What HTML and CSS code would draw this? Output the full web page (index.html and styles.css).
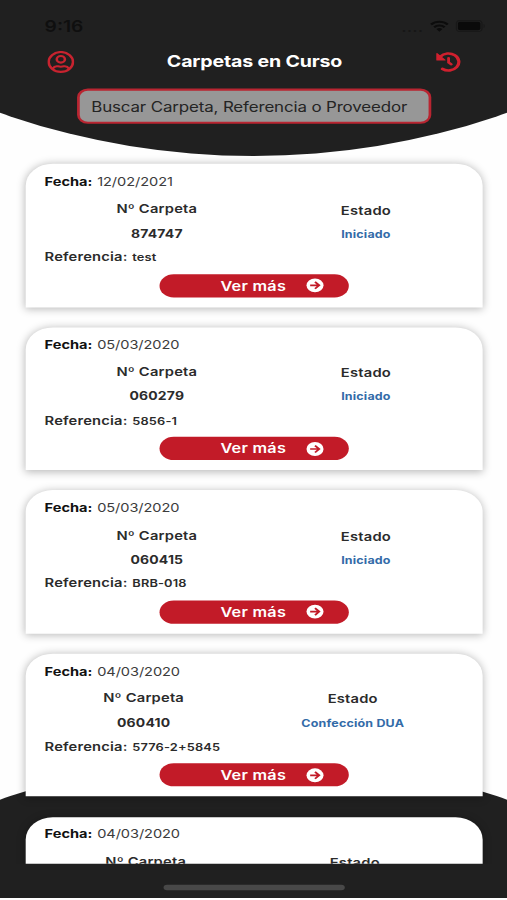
FILE: index.html
```
<!DOCTYPE html>
<html lang="es">
<head>
<meta charset="utf-8">
<title>Carpetas en Curso</title>
<link rel="stylesheet" href="styles.css">
</head>
<body>
<svg width="0" height="0" class="defs">
  <symbol id="go" viewBox="0 0 14 14"><circle cx="7" cy="7" r="6.3" fill="#fff"/><path d="M3.4 7h6.4M7 3.9 10.1 7 7 10.1" fill="none" stroke="#c21b28" stroke-width="1.5"/></symbol>
</svg>
<main class="phone">
  <div class="curve-top"></div>
  <div class="curve-bottom"></div>
  <header class="status">
    <span class="time">9:16</span>
    <span class="signals">
      <span class="dots">....</span>
      <svg width="14" height="11" viewBox="0 0 14 11"><g fill="none" stroke="#0c0c0c" stroke-width="1.9"><path d="M.8 4.1a9 9 0 0 1 12.4 0M3.1 6.6a5.6 5.6 0 0 1 7.8 0"/></g><path d="M4.8 8.3a3.3 3.3 0 0 1 4.4 0L7 10.7z" fill="#0c0c0c"/></svg>
      <svg width="22" height="11" viewBox="0 0 22 11"><rect x=".5" y=".5" width="19" height="10" rx="2.8" fill="none" stroke="#181818"/><rect x="1.7" y="1.7" width="16.6" height="7.6" rx="1.6" fill="#0a0a0a"/><path d="M20.6 3.8v3.4q1-.5 1-1.7t-1-1.7" fill="#181818"/></svg>
    </span>
  </header>
  <nav class="bar">
    <svg width="20" height="20" viewBox="0 0 20 20" fill="none" stroke="#c8232f" stroke-width="1.9"><circle cx="10" cy="10" r="9"/><circle cx="10" cy="7.6" r="3"/><path d="M3.9 16.2c1-1.8 2.6-2.6 4-2.2q2.1.6 4.2 0c1.4-.4 3 .4 4 2.2"/></svg>
    <h1>Carpetas en Curso</h1>
    <svg width="19" height="19" viewBox="0 0 19 19"><path d="M3.7 4.2A7.7 7.7 0 1 1 5.200 15.300" fill="none" stroke="#d0202e" stroke-width="2.4" stroke-linecap="round"/><path d="M1.2 1.4v5.900h5.900z" fill="#d0202e" stroke="#d0202e" stroke-linejoin="round"/><path d="M9.800 5.500v4l2 1.700" fill="none" stroke="#d0202e" stroke-width="2.100" stroke-linecap="round"/></svg>
  </nav>
  <div class="search">Buscar Carpeta, Referencia o Proveedor</div>
  <section class="list">
    <article class="card">
      <p class="date"><b>Fecha:</b><span>12/02/2021</span></p>
      <div class="cols"><div><h2>Nº Carpeta</h2><strong>874747</strong></div><div class="state"><h2>Estado</h2><em>Iniciado</em></div></div>
      <p class="ref"><b>Referencia:</b><span>test</span></p>
      <a class="more"><span>Ver más</span><svg width="14" height="14"><use href="#go"/></svg></a>
    </article>
    <article class="card">
      <p class="date"><b>Fecha:</b><span>05/03/2020</span></p>
      <div class="cols"><div><h2>Nº Carpeta</h2><strong>060279</strong></div><div class="state"><h2>Estado</h2><em>Iniciado</em></div></div>
      <p class="ref"><b>Referencia:</b><span>5856-1</span></p>
      <a class="more"><span>Ver más</span><svg width="14" height="14"><use href="#go"/></svg></a>
    </article>
    <article class="card">
      <p class="date"><b>Fecha:</b><span>05/03/2020</span></p>
      <div class="cols"><div><h2>Nº Carpeta</h2><strong>060415</strong></div><div class="state"><h2>Estado</h2><em>Iniciado</em></div></div>
      <p class="ref"><b>Referencia:</b><span>BRB-018</span></p>
      <a class="more"><span>Ver más</span><svg width="14" height="14"><use href="#go"/></svg></a>
    </article>
    <article class="card">
      <p class="date"><b>Fecha:</b><span>04/03/2020</span></p>
      <div class="cols"><div><h2>Nº Carpeta</h2><strong>060410</strong></div><div class="state"><h2>Estado</h2><em>Confección DUA</em></div></div>
      <p class="ref"><b>Referencia:</b><span>5776-2+5845</span></p>
      <a class="more"><span>Ver más</span><svg width="14" height="14"><use href="#go"/></svg></a>
    </article>
    <article class="card">
      <p class="date"><b>Fecha:</b><span>04/03/2020</span></p>
      <div class="cols"><div><h2>Nº Carpeta</h2></div><div class="state wide"><h2>Estado</h2></div></div>
    </article>
  </section>
  <div class="home"></div>
</main>
</body>
</html>
```
FILE: styles.css
```
* { box-sizing: border-box; margin: 0; padding: 0; }
body { width: 507px; height: 900px; overflow: hidden; background: #fff; }
.defs { position: absolute; }
/* 375x812 device canvas stretched to the window */
.phone {
  position: relative;
  width: 375px;
  height: 812px;
  overflow: hidden;
  display: flex;
  flex-direction: column;
  background: #fefefe;
  font-family: Inter, "Liberation Sans", sans-serif;
  color: #2b2b2b;
  transform: scale(1.352, 1.106);
  transform-origin: 0 0;
}
.curve-top, .curve-bottom { position: absolute; left: 0; width: 100%; background: #202020; }
.curve-top { top: 0; height: 142px; clip-path: circle(470px at 50% -329px); }
.curve-bottom { bottom: 0; height: 128px; clip-path: circle(470px at 50% 470px); }
.status, .bar, .search, .list, .home { position: relative; }
.status { height: 44px; padding: 2px 16px 0 33px; display: flex; align-items: center; justify-content: space-between; color: #0f0f0f; }
.time { font-size: 14.2px; font-weight: 600; }
.signals { display: flex; align-items: center; gap: 5px; }
.dots { font-size: 14px; color: #161616; }
.bar { height: 24px; padding: 0 34.2px 0 34.7px; display: flex; align-items: center; justify-content: space-between; }
.bar h1 { font-size: 14.5px; line-height: 24px; font-weight: 700; letter-spacing: -.14px; color: #fff; }
.search { width: 262px; height: 32px; margin: 12px auto 0; border: 2px solid #b92531; border-radius: 8px; background: #979797; padding-left: 9px; font-size: 12.5px; letter-spacing: -.1px; line-height: 29px; color: #242424; white-space: nowrap; }
.list { height: 656px; margin-top: 13px; padding: 23.3px 18.3px 0 19.2px; overflow: hidden; display: flex; flex-direction: column; gap: 18.3px; }
.card { flex: none; height: 129.3px; padding: 8.8px 14.4px 0 13.8px; background: #fff; border-radius: 20px 20px 0 0; box-shadow: 0 1px 7px rgba(0, 0, 0, .28); }
.date, .ref { display: flex; align-items: baseline; height: 16px; line-height: 16px; font-size: 10.8px; white-space: nowrap; }
.date { gap: 3.5px; }
.date b { font-weight: 700; color: #111; }
.date span { color: #3c3c3c; letter-spacing: -.06px; }
.cols { display: flex; justify-content: space-around; margin-top: 7.6px; height: 43.6px; text-align: center; }
.cols h2 { font-size: 10.9px; line-height: 17px; font-weight: 600; letter-spacing: .15px; }
.cols strong, .cols em { display: block; line-height: 16px; margin-top: 5px; font-weight: 700; }
.cols strong { font-size: 10.3px; letter-spacing: .15px; }
.cols em { font-size: 9.2px; letter-spacing: .15px; font-style: normal; color: #336ba8; }
.state { padding-top: 1px; }
.wide { width: 70px; }
.ref { gap: 3.5px; font-size: 10.9px; letter-spacing: .13px; }
.ref b { font-weight: 600; }
.ref span { font-size: 9.5px; font-weight: 600; letter-spacing: .1px; }
.more { display: flex; align-items: center; justify-content: flex-end; width: 140px; height: 21px; margin: 7.4px auto 0; padding-right: 18px; gap: 14px; border-radius: 11px; background: #c21b28; color: #fff; font-size: 12px; font-weight: 600; letter-spacing: .2px; }
.home { width: 134px; height: 5px; margin: 18.5px auto 0; border-radius: 3px; background: #484848; }
```
